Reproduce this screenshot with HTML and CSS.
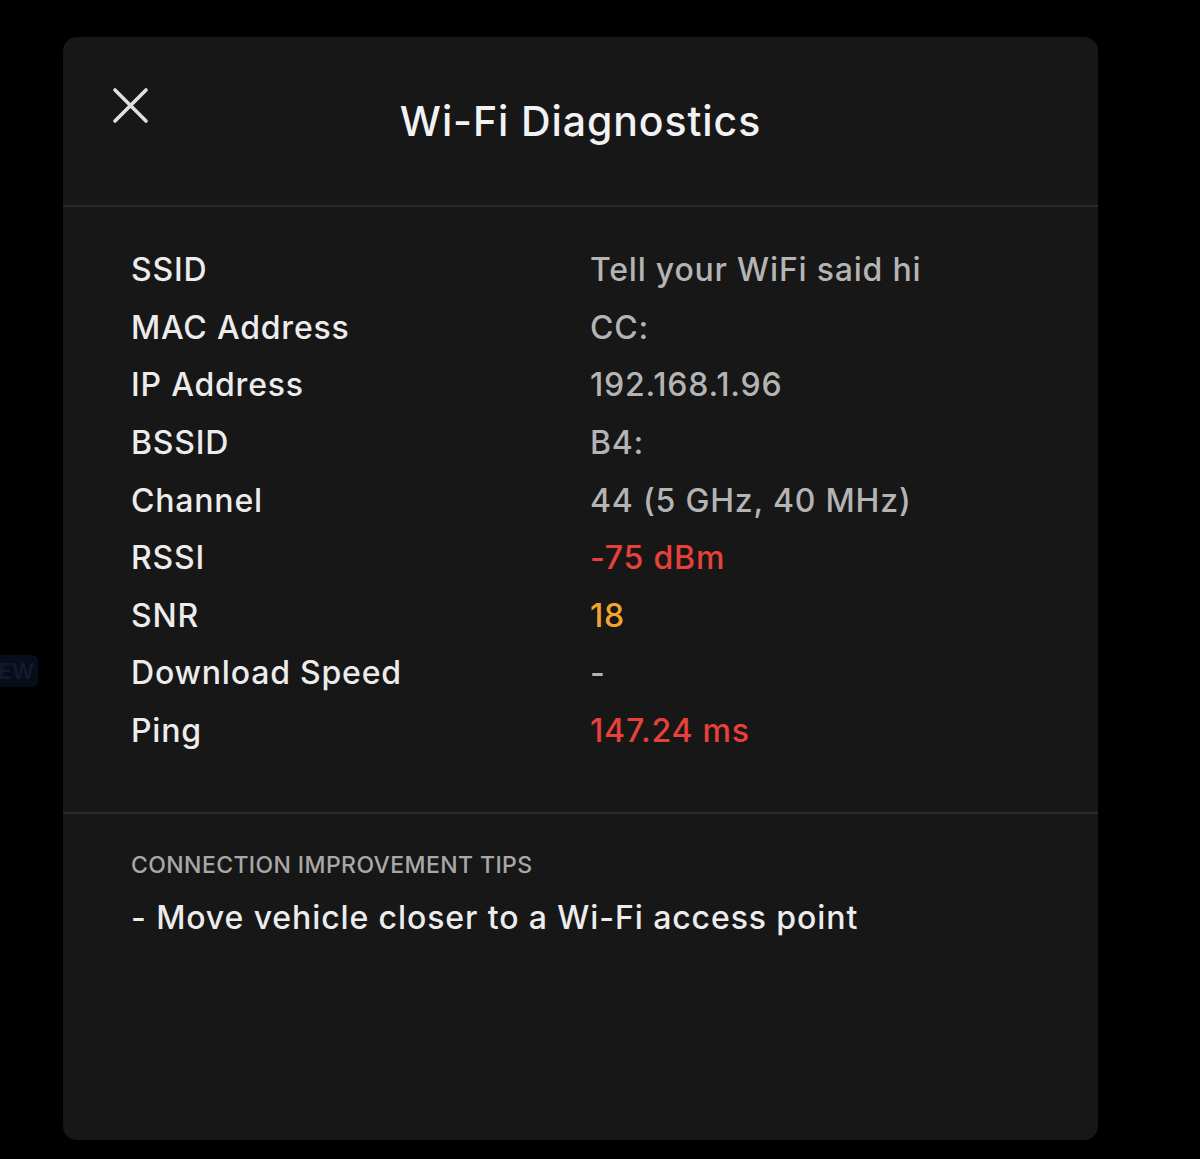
FILE: index.html
```html
<!DOCTYPE html>
<html>
<head>
<meta charset="utf-8">
<meta name="viewport" content="width=device-width, initial-scale=1">
<title>Wi-Fi Diagnostics</title>
<link rel="stylesheet" href="styles.css">
</head>
<body>

	<div id="backdrop">
		<div class="badge">NEW</div>
	</div>

	<div id="panel">
		<div id="header">
			<div class="close">
				<svg width="38" height="38" viewBox="0 0 38 38">
					<path d="M4 4 L35 35 M35 4 L4 35" stroke="#e0e0e0" stroke-width="3.6" stroke-linecap="round" fill="none"/>
				</svg>
			</div>
			<h1>Wi-Fi Diagnostics</h1>
			<div></div>
		</div>

		<div id="stats">
			<div class="label">SSID</div><div class="value">Tell your WiFi said hi</div>
			<div class="label">MAC Address</div><div class="value">CC:</div>
			<div class="label">IP Address</div><div class="value">192.168.1.96</div>
			<div class="label">BSSID</div><div class="value">B4:</div>
			<div class="label">Channel</div><div class="value">44 (5 GHz, 40 MHz)</div>
			<div class="label">RSSI</div><div class="value bad">-75 dBm</div>
			<div class="label">SNR</div><div class="value warn">18</div>
			<div class="label">Download Speed</div><div class="value">-</div>
			<div class="label">Ping</div><div class="value bad">147.24 ms</div>
		</div>

		<div id="tips">
			<h2>CONNECTION IMPROVEMENT TIPS</h2>
			<p>- Move vehicle closer to a Wi-Fi access point</p>
		</div>
	</div>

</body>
</html>
```

FILE: styles.css
```css
	body {
		margin: 0;
		background-color: #000;
		font-family: Inter, "Noto Sans", sans-serif;
		display: flex;
		height: 1159px;
		overflow: hidden;
	}

	#backdrop {
		width: 63px;
		display: flex;
		flex-direction: column;
		justify-content: center;
		padding-top: 183px;
		box-sizing: border-box;
	}

	.badge {
		margin-left: -22px;
		width: 60px;
		height: 32px;
		border-radius: 6px;
		background-color: #090d1b;
		color: #131a2d;
		font-size: 22px;
		font-weight: 600;
		line-height: 32px;
		text-align: center;
	}

	#panel {
		box-sizing: border-box;
		margin-top: 37px;
		width: 1035px;
		height: 1103px;
		background-color: #171717;
		border-radius: 14px;
		display: flex;
		flex-direction: column;
	}

	#header {
		height: 168px;
		display: grid;
		grid-template-columns: 1fr auto 1fr;
		align-items: center;
		border-bottom: 2px solid #2a2a2a;
	}

	.close {
		align-self: start;
		padding: 49px 0 0 48px;
	}

	.close svg {
		display: block;
	}

	h1 {
		margin: 0;
		color: #f2f2f2;
		font-size: 41px;
		font-weight: 500;
		letter-spacing: 0.9px;
	}

	#stats {
		display: grid;
		grid-template-columns: 459px 1fr;
		grid-auto-rows: 57.6px;
		align-items: center;
		padding: 34px 68px 53px 68px;
		border-bottom: 2px solid #2a2a2a;
		font-size: 32px;
		font-weight: 500;
		letter-spacing: 0.8px;
	}

	.label {
		color: #ececec;
	}

	.value {
		color: #b4b4b4;
	}

	.bad {
		color: #e8413b;
	}

	.warn {
		color: #f2a52c;
	}

	#tips {
		padding: 37px 68px;
	}

	h2 {
		margin: 0;
		color: #a8a8a8;
		font-size: 23px;
		font-weight: 500;
		letter-spacing: 0.4px;
	}

	#tips p {
		margin: 19px 0 0 0;
		color: #ececec;
		font-size: 32px;
		font-weight: 500;
		letter-spacing: 0.9px;
	}
```
